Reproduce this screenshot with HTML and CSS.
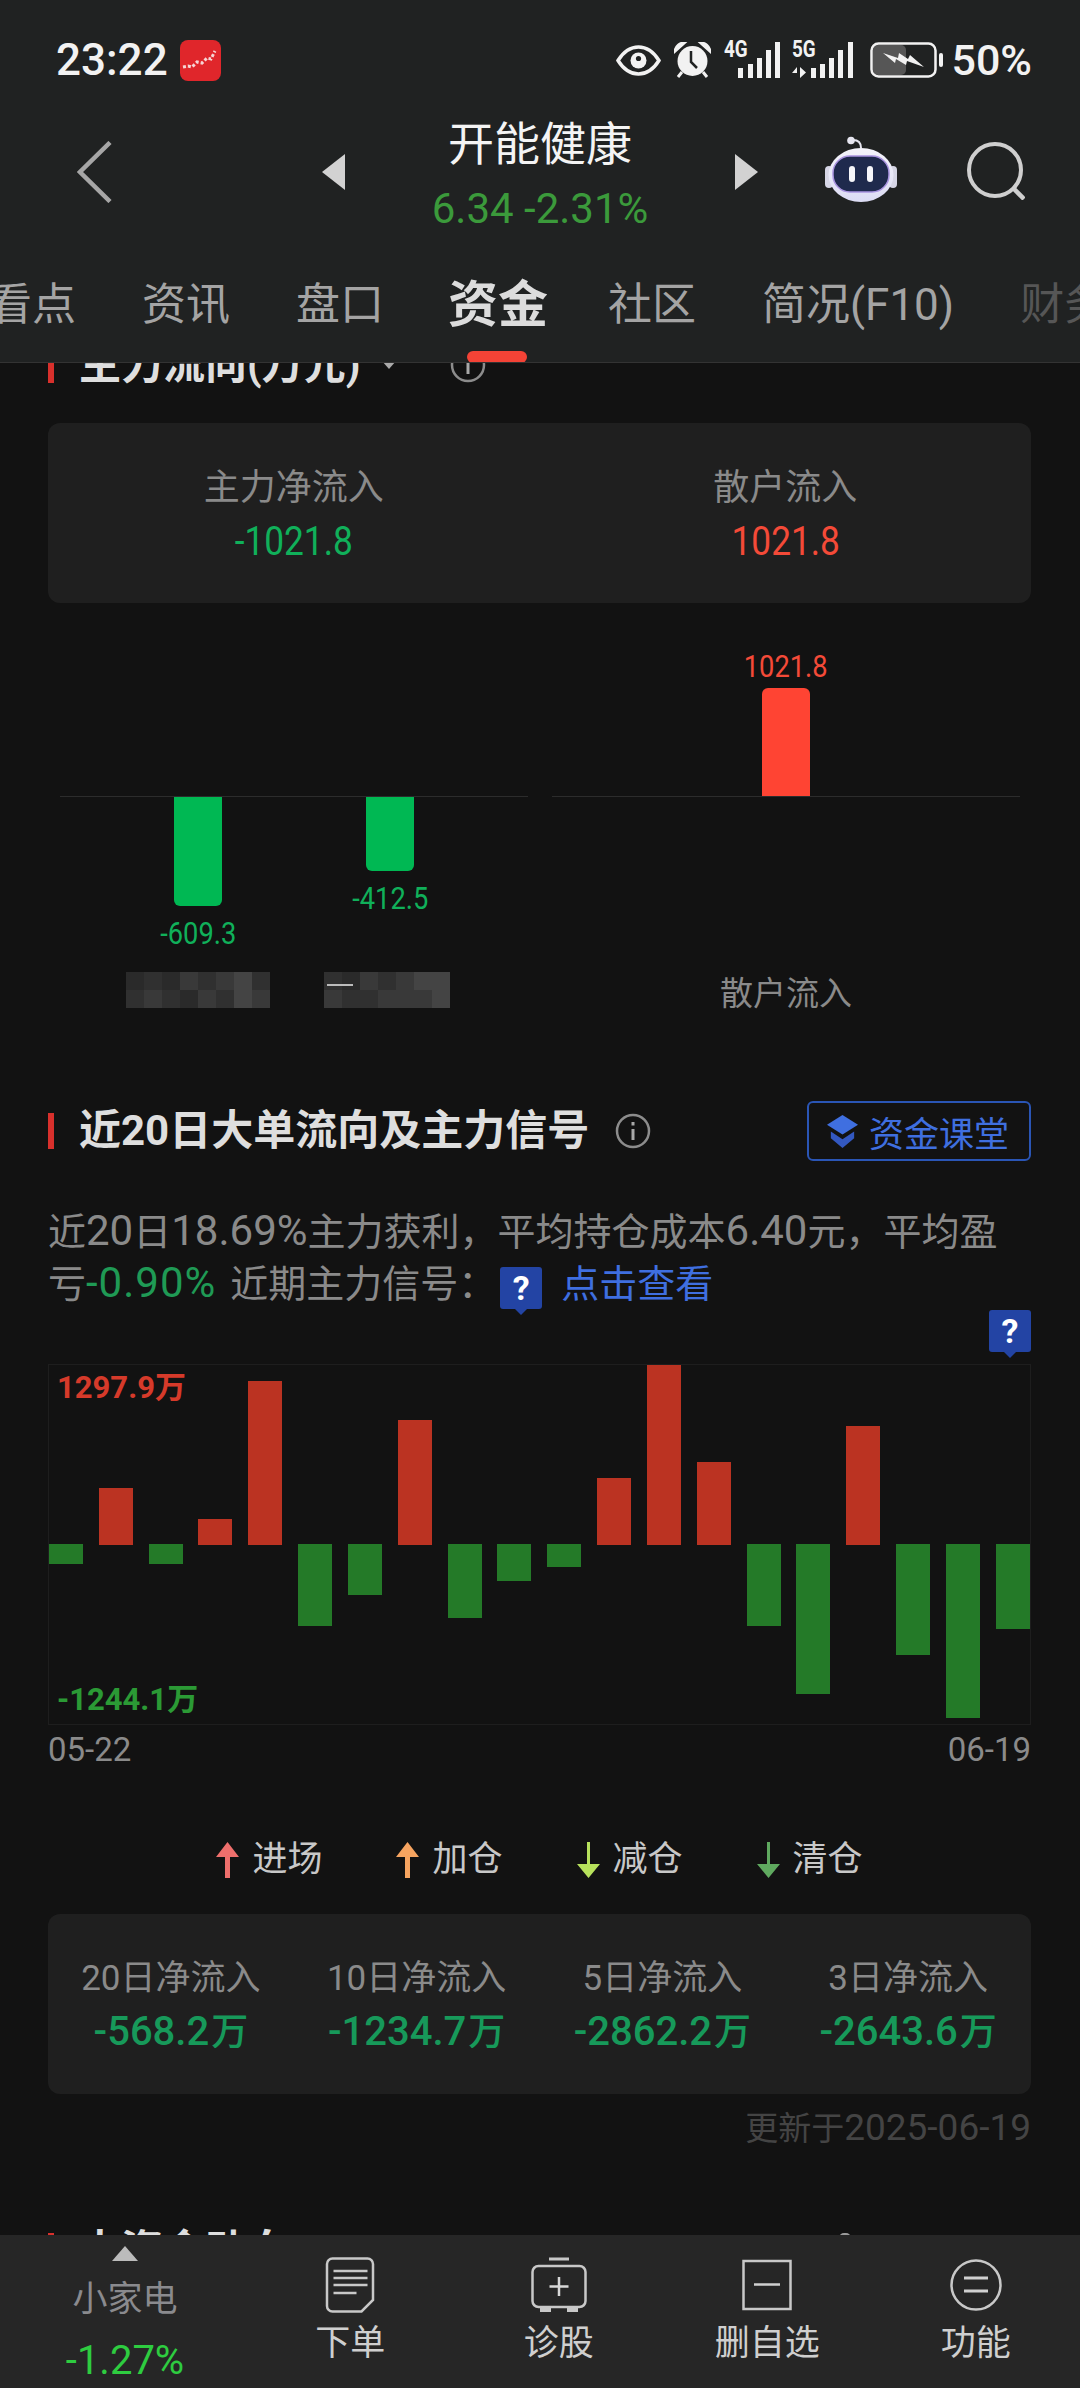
FILE: index.html
```html
<!DOCTYPE html>
<html lang="zh-CN">
<head>
    <meta charset="UTF-8">
    <meta name="viewport" content="width=device-width, initial-scale=1.0">
    <title>开能健康 资金</title>
    <link rel="stylesheet" href="styles.css">
</head>
<body>

    <header class="top">
        <div class="status-bar">
            <div class="status-left">
                <span class="clock">23:22</span>
                <svg class="app-badge" viewBox="0 0 41 41">
                    <rect width="41" height="41" rx="8" fill="#e0262b"/>
                    <path d="M3 27l5-1 4 1 5-5 5 1 5-5 4 1 4-8" fill="none" stroke="#f6d5d5" stroke-width="3" stroke-dasharray="3 2"/>
                </svg>
            </div>
            <div class="status-right">
                <svg class="icon-eye" viewBox="0 0 45 31">
                    <path d="M2 15.500C8 6 15 2 22.500 2S37 6 43 15.500C37 25 30 29 22.500 29S8 25 2 15.500z" fill="none" stroke="#f2f2f2" stroke-width="3.500"/>
                    <circle cx="22.500" cy="15.500" r="8" fill="#f2f2f2"/>
                    <circle cx="22.500" cy="13.500" r="2.600" fill="#202222"/>
                </svg>
                <svg class="icon-alarm" viewBox="0 0 37 36">
                    <circle cx="18.500" cy="19" r="15" fill="#f2f2f2"/>
                    <path d="M1 9c1-5 5-8 9-8L1 9zM36 9c-1-5-5-8-9-8l9 8z" stroke="#f2f2f2" stroke-width="3"/>
                    <path d="M8 30l-4 5M29 30l4 5" stroke="#f2f2f2" stroke-width="3"/>
                    <path d="M17 9v11l6 6" fill="none" stroke="#202222" stroke-width="2.500"/>
                </svg>
                <div class="signal">
                    <span class="signal-name">4G</span>
                    <svg viewBox="0 0 57 37">
                        <path d="M14 26h5v10h-5zM24 22h5v14h-5zM33 16h5v20h-5zM42 8h5v28h-5zM51 0h5v36h-5z" fill="#f2f2f2"/>
                    </svg>
                </div>
                <div class="signal">
                    <span class="signal-name">5G</span>
                    <svg viewBox="0 0 62 37">
                        <path d="M5 36V25L0 31h5zM8 25v11l6-5.500zM19 26h5v10h-5zM28 22h5v14h-5zM37 16h5v20h-5zM46 8h5v28h-5zM56 0h5v36h-5z" fill="#f2f2f2"/>
                    </svg>
                </div>
                <svg class="icon-battery" viewBox="0 0 73 36">
                    <rect x="3" y="3" width="33" height="30" rx="5" fill="#565656"/>
                    <rect x="1.500" y="1.500" width="64" height="33" rx="7" fill="none" stroke="#f2f2f2" stroke-width="2.500"/>
                    <rect x="69" y="11" width="4" height="14" rx="2" fill="#f2f2f2"/>
                    <path d="M13 11l15 5 1-5 9 6 2-4 14 12-17-6-1 4-10-6-1 4z" fill="#f2f2f2"/>
                </svg>
                <span class="battery-num">50%</span>
            </div>
        </div>

        <div class="nav-bar">
            <div class="nav-left">
                <svg class="icon-back" viewBox="0 0 35 62">
                    <path d="M33 1.500L3 31l30 29.500" fill="none" stroke="#a6a6a6" stroke-width="4.500"/>
                </svg>
            </div>
            <div class="nav-center">
                <span class="tri-left"></span>
                <div class="stock">
                    <div class="stock-name">开能健康</div>
                    <div class="stock-price">6.34 -2.31%</div>
                </div>
                <span class="tri-right"></span>
            </div>
            <div class="nav-right">
                <svg class="icon-robot" viewBox="0 0 72 66">
                    <defs>
                        <linearGradient id="head" x1="0" y1="0" x2="0" y2="1">
                            <stop offset="0" stop-color="#f4f4fb"/>
                            <stop offset="1" stop-color="#dcdcf4"/>
                        </linearGradient>
                    </defs>
                    <circle cx="26" cy="4.500" r="3.800" fill="#e6e6f0"/>
                    <path d="M28 4c5 0 8 3 8 8" fill="none" stroke="#e6e6f0" stroke-width="2"/>
                    <rect x="0" y="30" width="8" height="22" rx="4" fill="#d6d6e6"/>
                    <rect x="64" y="30" width="8" height="22" rx="4" fill="#d6d6e6"/>
                    <ellipse cx="36" cy="39" rx="32.500" ry="27" fill="url(#head)"/>
                    <rect x="8" y="20" width="56" height="36" rx="17" fill="#1f2a4d" stroke="#a994e0" stroke-width="1.500"/>
                    <rect x="24" y="30" width="6" height="16" rx="3" fill="#f6f6fa"/>
                    <rect x="42" y="30" width="6" height="16" rx="3" fill="#f6f6fa"/>
                </svg>
                <svg class="icon-search" viewBox="0 0 58 58">
                    <circle cx="28" cy="28" r="26" fill="none" stroke="#cfcfcf" stroke-width="4"/>
                    <path d="M46 46l11 11" stroke="#cfcfcf" stroke-width="4.500"/>
                </svg>
            </div>
        </div>

        <nav class="tabs">
            <span class="tab">看点</span>
            <span class="tab">资讯</span>
            <span class="tab">盘口</span>
            <span class="tab active">资金</span>
            <span class="tab">社区</span>
            <span class="tab">简况(F10)</span>
            <span class="tab faded">财务</span>
        </nav>
    </header>

    <main class="content">
        <section class="main-flow">
            <div class="section-head">
                <div class="section-title">
                    <span class="title-mark"></span>
                    <h2>主力流向(万元)</h2>
                    <span class="title-caret"></span>
                    <svg class="icon-info info-caret" viewBox="0 0 36 36">
                        <circle cx="18" cy="18" r="16" fill="none" stroke="#8c8c8c" stroke-width="2.500"/>
                        <path d="M18 16v11M18 9v3.500" stroke="#a8a8a8" stroke-width="3"/>
                    </svg>
                </div>
            </div>

            <div class="stat-card stat-two">
                <div class="stat">
                    <div class="stat-label">主力净流入</div>
                    <div class="stat-value fall">-1021.8</div>
                </div>
                <div class="stat">
                    <div class="stat-label">散户流入</div>
                    <div class="stat-value rise">1021.8</div>
                </div>
            </div>

            <div class="panes">
                <div class="pane">
                    <div class="pane-up"></div>
                    <div class="pane-down">
                        <div class="pane-col">
                            <div class="col-bar bar-fall bar-a"></div>
                            <div class="col-num fall">-609.3</div>
                        </div>
                        <div class="pane-col">
                            <div class="col-bar bar-fall bar-b"></div>
                            <div class="col-num fall">-412.5</div>
                        </div>
                    </div>
                    <div class="pane-names">
                        <div class="pane-col">
                            <div class="mosaic mosaic-a">
                                <i class="m1"></i><i class="m2"></i><i class="m1"></i><i class="m3"></i><i class="m2"></i><i class="m3"></i><i class="m4"></i><i class="m2"></i>
                                <i class="m2"></i><i class="m3"></i><i class="m2"></i><i class="m1"></i><i class="m3"></i><i class="m2"></i><i class="m4"></i><i class="m3"></i>
                            </div>
                        </div>
                        <div class="pane-col">
                            <div class="mosaic mosaic-b">
                                <i class="m2"></i><i class="m1"></i><i class="m3"></i><i class="m2"></i><i class="m3"></i><i class="m4"></i><i class="m4"></i>
                                <i class="m3"></i><i class="m2"></i><i class="m2"></i><i class="m3"></i><i class="m3"></i><i class="m3"></i><i class="m4"></i>
                            </div>
                        </div>
                    </div>
                </div>
                <div class="pane">
                    <div class="pane-up">
                        <div class="pane-col">
                            <div class="col-num rise num-up">1021.8</div>
                            <div class="col-bar bar-rise bar-c"></div>
                        </div>
                    </div>
                    <div class="pane-down"></div>
                    <div class="pane-names">
                        <div class="pane-col retail-name">散户流入</div>
                    </div>
                </div>
            </div>
        </section>

        <section class="big-flow">
            <div class="section-head">
                <div class="section-title">
                    <span class="title-mark"></span>
                    <h2>近20日大单流向及主力信号</h2>
                    <svg class="icon-info" viewBox="0 0 36 36">
                        <circle cx="18" cy="18" r="16" fill="none" stroke="#8c8c8c" stroke-width="2.500"/>
                        <path d="M18 16v11M18 9v3.500" stroke="#a8a8a8" stroke-width="3"/>
                    </svg>
                </div>
                <div class="class-btn">
                    <svg viewBox="0 0 34 36">
                        <path d="M17 1l16 10-16 10L1 11z" fill="#3f6fe0"/>
                        <path d="M5 18v7l12 10 12-10v-7L17 26z" fill="#3358c0"/>
                    </svg>
                    <span>资金课堂</span>
                </div>
            </div>

            <p class="summary">近<span class="num">20</span>日<span class="num">18.69%</span>主力获利，平均持仓成本<span class="num">6.40</span>元，平均盈<br>亏<span class="num green-text">-0.90%</span>近期主力信号：<span class="signal-badge badge-inline">?</span><span class="link">点击查看</span></p>

            <div class="badge-row"><span class="signal-badge">?</span></div>

            <div class="flow-chart">
                <span class="chart-max">1297.9万</span>
                <span class="chart-min">-1244.1万</span>
                <div class="slots">
                    <div class="slot neg"><div class="flow down" style="height:20px"></div></div>
                    <div class="slot"><div class="flow up" style="height:57px"></div></div>
                    <div class="slot neg"><div class="flow down" style="height:20px"></div></div>
                    <div class="slot"><div class="flow up" style="height:26px"></div></div>
                    <div class="slot"><div class="flow up" style="height:164px"></div></div>
                    <div class="slot neg"><div class="flow down" style="height:82px"></div></div>
                    <div class="slot neg"><div class="flow down" style="height:51px"></div></div>
                    <div class="slot"><div class="flow up" style="height:125px"></div></div>
                    <div class="slot neg"><div class="flow down" style="height:74px"></div></div>
                    <div class="slot neg"><div class="flow down" style="height:37px"></div></div>
                    <div class="slot neg"><div class="flow down" style="height:23px"></div></div>
                    <div class="slot"><div class="flow up" style="height:67px"></div></div>
                    <div class="slot"><div class="flow up" style="height:180px"></div></div>
                    <div class="slot"><div class="flow up" style="height:83px"></div></div>
                    <div class="slot neg"><div class="flow down" style="height:82px"></div></div>
                    <div class="slot neg"><div class="flow down" style="height:150px"></div></div>
                    <div class="slot"><div class="flow up" style="height:119px"></div></div>
                    <div class="slot neg"><div class="flow down" style="height:111px"></div></div>
                    <div class="slot neg"><div class="flow down" style="height:174px"></div></div>
                    <div class="slot neg"><div class="flow down" style="height:85px"></div></div>
                </div>
            </div>

            <div class="chart-dates">
                <span>05-22</span>
                <span>06-19</span>
            </div>

            <div class="legend">
                <div class="legend-item">
                    <svg viewBox="0 0 23 36"><path d="M11.500 0L23 15h-9v21H9V15H0z" fill="#ee6f6c"/></svg>
                    <span>进场</span>
                </div>
                <div class="legend-item">
                    <svg viewBox="0 0 23 36"><path d="M11.500 0L23 15h-9v21H9V15H0z" fill="#f6a460"/></svg>
                    <span>加仓</span>
                </div>
                <div class="legend-item">
                    <svg viewBox="0 0 23 36"><path d="M11.500 36L23 22h-10V0h-3v22H0z" fill="#b7e15c"/></svg>
                    <span>减仓</span>
                </div>
                <div class="legend-item">
                    <svg viewBox="0 0 23 36"><path d="M11.500 36L23 22h-10V0h-3v22H0z" fill="#5fa95f"/></svg>
                    <span>清仓</span>
                </div>
            </div>

            <div class="stat-card stat-four">
                <div class="stat">
                    <div class="stat-label small">20日净流入</div>
                    <div class="stat-value deep">-568.2<span class="unit">万</span></div>
                </div>
                <div class="stat">
                    <div class="stat-label small">10日净流入</div>
                    <div class="stat-value deep">-1234.7<span class="unit">万</span></div>
                </div>
                <div class="stat">
                    <div class="stat-label small">5日净流入</div>
                    <div class="stat-value deep">-2862.2<span class="unit">万</span></div>
                </div>
                <div class="stat">
                    <div class="stat-label small">3日净流入</div>
                    <div class="stat-value deep">-2643.6<span class="unit">万</span></div>
                </div>
            </div>

            <div class="updated">更新于<span class="updated-date">2025-06-19</span></div>
        </section>

        <section class="next-section">
            <div class="section-head">
                <div class="section-title">
                    <span class="title-mark"></span>
                    <h2>大资金动向</h2>
                </div>
                <div class="next-more">
                    <span class="next-icon"></span>
                    <span>龙虎榜</span>
                </div>
            </div>
        </section>
    </main>

    <footer class="bottom">
        <div class="sector">
            <span class="tri-up"></span>
            <div class="sector-name">小家电</div>
            <div class="sector-pct">-1.27%</div>
        </div>
        <div class="action">
            <svg viewBox="0 0 49 56">
                <path d="M7 1.500h35a5.500 5.500 0 0 1 5.500 5.500v36L36 54.500H7A5.500 5.500 0 0 1 1.500 49V7A5.500 5.500 0 0 1 7 1.500z" fill="none" stroke="#c8c8c8" stroke-width="2.500"/>
                <path d="M8 14h34M8 21h34M8 28h34M8 36h23" stroke="#c8c8c8" stroke-width="2.500"/>
            </svg>
            <span>下单</span>
        </div>
        <div class="action">
            <svg viewBox="0 0 56 56">
                <path d="M18 2h20" stroke="#c8c8c8" stroke-width="3"/>
                <rect x="1.500" y="9" width="53" height="41" rx="6" fill="none" stroke="#c8c8c8" stroke-width="2.500"/>
                <path d="M28 20v19M18.500 29.500h19" stroke="#d8d8d8" stroke-width="2.500"/>
                <path d="M9 50h11v5H9zM36 50h11v5H36z" fill="#c8c8c8"/>
            </svg>
            <span>诊股</span>
        </div>
        <div class="action">
            <svg viewBox="0 0 50 56">
                <rect x="1.500" y="4" width="47" height="48" fill="none" stroke="#c8c8c8" stroke-width="2.500"/>
                <path d="M12 27.500h26" stroke="#d0d0d0" stroke-width="2.500"/>
            </svg>
            <span>删自选</span>
        </div>
        <div class="action">
            <svg viewBox="0 0 52 56">
                <circle cx="26" cy="28" r="24.500" fill="none" stroke="#c8c8c8" stroke-width="2.500"/>
                <path d="M14 21h24M14 34h24" stroke="#d0d0d0" stroke-width="3"/>
            </svg>
            <span>功能</span>
        </div>
    </footer>

</body>
</html>
```

FILE: styles.css
```css
* {
    box-sizing: border-box;
}

html, body {
    margin: 0;
    padding: 0;
}

body {
    width: 1080px;
    height: 2388px;
    overflow: hidden;
    display: flex;
    flex-direction: column;
    background-color: #121212;
    font-family: Roboto, "Noto Sans CJK SC", sans-serif;
    color: #e6e6e6;
}

/* top area */
.top {
    height: 363px;
    flex: none;
    background-color: #202222;
    position: relative;
    z-index: 2;
    border-bottom: 1px solid #333;
}

.status-bar {
    height: 113px;
    display: flex;
    justify-content: space-between;
    align-items: center;
    padding: 7px 48px 0 56px;
}

.status-left {
    display: flex;
    align-items: center;
    gap: 12px;
}

.clock {
    font-size: 44px;
    font-weight: 500;
    color: #f2f2f2;
    line-height: 50px;
}

.app-badge {
    width: 41px;
    height: 41px;
}

.status-right {
    display: flex;
    align-items: center;
}

.icon-eye {
    width: 45px;
    height: 31px;
    margin-right: 13px;
}

.icon-alarm {
    width: 37px;
    height: 36px;
    margin-right: 13px;
}

.signal {
    position: relative;
    height: 37px;
    margin-right: 11px;
}

.signal svg {
    display: block;
    height: 37px;
}

.signal-name {
    position: absolute;
    left: 0;
    top: -3px;
    font-size: 23px;
    font-weight: 700;
    line-height: 22px;
    color: #f2f2f2;
    transform: scaleX(.82);
    transform-origin: left;
}

.signal:nth-child(3) svg {
    width: 57px;
}

.signal:nth-child(4) svg {
    width: 62px;
}

.icon-battery {
    width: 73px;
    height: 36px;
    margin: 0 8px 0 5px;
}

.battery-num {
    font-size: 43px;
    font-weight: 500;
    color: #f2f2f2;
    line-height: 50px;
}

.nav-bar {
    height: 122px;
    display: grid;
    grid-template-columns: 1fr 436px 1fr;
    align-items: center;
}

.nav-left {
    padding-left: 77px;
    display: flex;
    margin-bottom: 5px;
}

.icon-back {
    width: 35px;
    height: 62px;
}

.nav-center {
    display: flex;
    justify-content: space-between;
    align-items: center;
}

.tri-left {
    margin-bottom: 5px;
    border-top: 18px solid transparent;
    border-bottom: 18px solid transparent;
    border-right: 23px solid #d2d2d2;
}

.tri-right {
    margin-bottom: 5px;
    border-top: 18px solid transparent;
    border-bottom: 18px solid transparent;
    border-left: 23px solid #d2d2d2;
}

.stock {
    text-align: center;
}

.stock-name {
    font-size: 46px;
    line-height: 54px;
    color: #f4f4f4;
}

.stock-price {
    font-size: 42px;
    line-height: 46px;
    margin-top: 15px;
    color: #3b9a3b;
}

.nav-right {
    display: flex;
    justify-content: flex-end;
    align-items: center;
    padding-right: 55px;
    gap: 70px;
    margin-bottom: 6px;
}

.icon-robot {
    width: 72px;
    height: 66px;
    margin-bottom: 4px;
}

.icon-search {
    width: 58px;
    height: 58px;
}

.tabs {
    height: 127px;
    display: flex;
    align-items: center;
    gap: 66px;
    margin-left: -12px;
    padding-top: 13px;
    overflow: hidden;
    white-space: nowrap;
    position: relative;
}

.tab {
    flex: none;
    font-size: 44px;
    line-height: 60px;
    color: #a4a4a4;
}

.tab.active {
    position: relative;
    margin: 0 -6px 0 -2px;
    font-size: 50px;
    font-weight: 700;
    color: #dcdcdc;
}

.tab.faded {
    color: #565656;
}

.tabs .tab.active::after {
    content: "";
    position: absolute;
    left: 19px;
    top: 76px;
    width: 60px;
    height: 12px;
    border-radius: 6px;
    background-color: #f44336;
}

/* scrolling content */
.content {
    flex: 1;
    min-height: 0;
    overflow: hidden;
    padding: 0 49px 0 48px;
}

.main-flow {
    margin-top: -28px;
}

.section-head {
    height: 60px;
    display: flex;
    justify-content: space-between;
    align-items: center;
}

.section-title {
    display: flex;
    align-items: center;
}

.title-mark {
    width: 6px;
    height: 36px;
    background-color: #d8302c;
    margin-right: 25px;
}

.section-title h2 {
    margin: 0;
    font-size: 42px;
    line-height: 60px;
    font-weight: 700;
    color: #dedede;
}

.title-caret {
    margin-left: 22px;
    border-left: 7px solid transparent;
    border-right: 7px solid transparent;
    border-top: 8px solid #aaa;
}

.icon-info {
    width: 36px;
    height: 36px;
    margin-left: 26px;
}

.info-caret {
    margin-left: 54px;
}

.stat-card {
    height: 180px;
    border-radius: 12px;
    background-color: #1f1f1f;
    display: grid;
    align-content: center;
}

.stat-two {
    margin-top: 28px;
    grid-template-columns: 1fr 1fr;
}

.stat-four {
    margin-top: 32px;
    grid-template-columns: repeat(4, 1fr);
}

.stat {
    text-align: center;
    padding-top: 3px;
}

.stat-label {
    font-size: 36px;
    line-height: 48px;
    color: #8a8a8a;
}

.stat-label.small {
    font-size: 35px;
}

.stat-value {
    font-size: 41px;
    line-height: 48px;
    margin-top: 5px;
    transform: scaleX(.86);
}

.stat-value.deep {
    font-size: 40px;
    font-weight: 500;
    color: #17995a;
    transform: none;
}

.unit {
    font-size: 37px;
    margin-left: 2px;
}

.fall {
    color: #10b05a;
}

.rise {
    color: #f44a38;
}

.panes {
    display: grid;
    grid-template-columns: 468px 468px;
    gap: 24px;
    margin-left: 12px;
}

.pane-up {
    height: 194px;
    display: flex;
    justify-content: center;
    align-items: flex-end;
    border-bottom: 1px solid #2c2c2c;
}

.pane-down {
    height: 175px;
    display: flex;
    padding: 0 42px;
}

.pane-names {
    height: 44px;
    display: flex;
    padding: 0 42px;
}

.pane-col {
    flex: 1;
    display: flex;
    flex-direction: column;
    align-items: center;
}

.col-bar {
    width: 48px;
}

.bar-fall {
    background-color: #00b853;
    border-radius: 0 0 6px 6px;
}

.bar-rise {
    background-color: #ff4433;
    border-radius: 6px 6px 0 0;
}

.bar-a {
    height: 109px;
}

.bar-b {
    height: 74px;
}

.bar-c {
    height: 108px;
}

.col-num {
    font-size: 31px;
    line-height: 36px;
    margin-top: 10px;
    transform: scaleX(.88);
}

.col-num.num-up {
    margin: 0 0 3px;
}

.retail-name {
    font-size: 33px;
    line-height: 44px;
    color: #8a8a8a;
}

.mosaic {
    display: grid;
    grid-auto-rows: 18px;
    grid-template-columns: repeat(8, 18px);
}

.mosaic-b {
    position: relative;
    grid-template-columns: repeat(7, 18px);
    margin-right: 6px;
}

.mosaic-b::before {
    content: "";
    position: absolute;
    left: 3px;
    top: 12px;
    width: 26px;
    height: 2px;
    background-color: #bbb;
}

.m1 {
    background-color: #2a2a2a;
}

.m2 {
    background-color: #303030;
}

.m3 {
    background-color: #393939;
}

.m4 {
    background-color: #444;
}

.big-flow {
    margin-top: 85px;
}

.class-btn {
    width: 224px;
    height: 60px;
    display: flex;
    align-items: center;
    gap: 10px;
    padding-left: 17px;
    border: 2px solid #2a55b5;
    border-radius: 6px;
    color: #3f6fe0;
    font-size: 35px;
}

.class-btn svg {
    width: 33px;
    height: 35px;
}

.summary {
    margin: 45px 0 0;
    font-size: 38px;
    line-height: 52px;
    height: 104px;
    color: #8a8a8a;
}

.num {
    font-size: 42px;
    line-height: 40px;
}

.green-text {
    color: #1f9a55;
    letter-spacing: 1px;
    margin-right: 14px;
}

.link {
    color: #3f6fe0;
}

.signal-badge {
    display: inline-block;
    position: relative;
    width: 42px;
    height: 42px;
    border-radius: 3px;
    background-color: #2344a4;
    color: #fff;
    font-size: 34px;
    font-weight: 700;
    line-height: 42px;
    text-align: center;
}

.badge-inline {
    margin: 0 19px 0 4px;
    vertical-align: -3px;
}

.signal-badge::after {
    content: "";
    position: absolute;
    left: 15px;
    top: 42px;
    border-left: 6px solid transparent;
    border-right: 6px solid transparent;
    border-top: 6px solid #2344a4;
}

.badge-row {
    height: 54px;
    display: flex;
    justify-content: flex-end;
}

.flow-chart {
    position: relative;
    height: 361px;
    border: 1px solid #1e1e1e;
}

.slots {
    display: flex;
    justify-content: space-between;
    height: 100%;
}

.slot {
    width: 34px;
    height: 180px;
    display: flex;
    align-items: flex-end;
}

.slot.neg {
    align-self: flex-end;
    align-items: flex-start;
}

.flow {
    width: 34px;
}

.flow.up {
    background-color: #bb3322;
}

.flow.down {
    background-color: #247a28;
}

.chart-max,
.chart-min {
    position: absolute;
    left: 8px;
    font-size: 31px;
    font-weight: 700;
    line-height: 36px;
}

.chart-max {
    top: 5px;
    color: #d63a2a;
}

.chart-min {
    bottom: 6px;
    color: #2b9a35;
}

.chart-dates {
    display: flex;
    justify-content: space-between;
    margin-top: 7px;
    font-size: 33px;
    line-height: 36px;
    color: #8a8a8a;
}

.legend {
    margin-top: 70px;
    display: flex;
    justify-content: center;
    gap: 74px;
}

.legend-item {
    display: flex;
    align-items: center;
    gap: 13px;
    font-size: 35px;
    line-height: 44px;
    color: #c8c8c8;
}

.legend-item svg {
    width: 23px;
    height: 36px;
}

.updated {
    margin-top: 14px;
    text-align: right;
    font-size: 33px;
    line-height: 40px;
    color: #444;
}

.updated-date {
    font-size: 37px;
}

.next-section {
    margin-top: 72px;
}

.next-more {
    display: flex;
    align-items: center;
    gap: 47px;
    padding-right: 25px;
    font-size: 36px;
    color: #9a9a9a;
}

.next-icon {
    width: 12px;
    height: 36px;
    border: 2px solid #9a9a9a;
    border-radius: 5px;
}

/* bottom bar */
.bottom {
    height: 153px;
    flex: none;
    position: relative;
    z-index: 2;
    background-color: #262626;
    display: grid;
    grid-template-columns: 246px repeat(4, 1fr);
}

.sector {
    display: flex;
    flex-direction: column;
    align-items: center;
    padding: 11px 0 0 4px;
}

.tri-up {
    border-left: 13px solid transparent;
    border-right: 13px solid transparent;
    border-bottom: 15px solid #bbb;
}

.sector-name {
    margin-top: 17px;
    font-size: 35px;
    line-height: 44px;
    color: #8a8a8e;
}

.sector-pct {
    margin-top: 15px;
    font-size: 40px;
    line-height: 48px;
    color: #2ecc40;
}

.action {
    display: flex;
    flex-direction: column;
    align-items: center;
    padding-top: 22px;
    font-size: 35px;
    line-height: 44px;
    color: #cfcfcf;
}

.action span {
    margin-top: 1px;
}

.action svg {
    height: 56px;
    width: 56px;
    margin-bottom: 8px;
}
```
